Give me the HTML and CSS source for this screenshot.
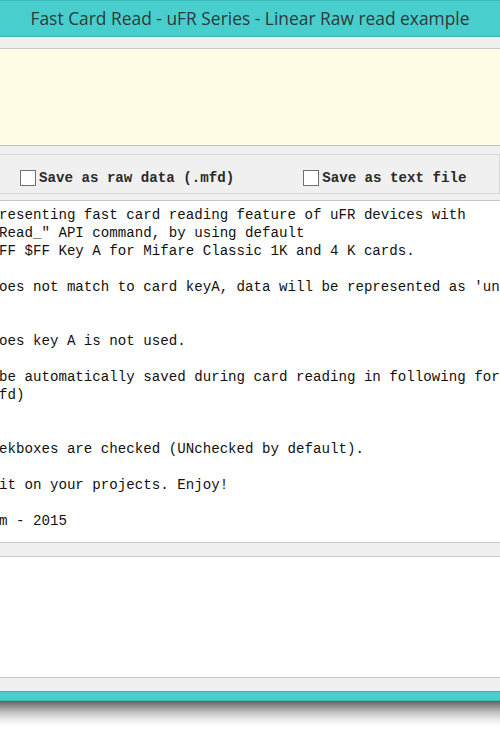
FILE: index.html
```html
<!DOCTYPE html>
<html>
<head>
<meta charset="utf-8">
<link rel="stylesheet" href="styles.css">
</head>
<body>
<div class="window">
  <div class="titlebar">Fast Card Read - uFR Series - Linear Raw read example</div>
  <div class="menustrip"></div>
  <div class="display"></div>
  <div class="options">
    <div class="groupbox">
      <label class="check check-raw"><span class="box"></span>Save as raw data (.mfd)</label>
      <label class="check check-text"><span class="box"></span>Save as text file</label>
    </div>
  </div>
  <div class="memo"><pre>resenting fast card reading feature of uFR devices with
Read_" API command, by using default
FF $FF Key A for Mifare Classic 1K and 4 K cards.

oes not match to card keyA, data will be represented as 'un


oes key A is not used.

be automatically saved during card reading in following form
fd)


ekboxes are checked (UNchecked by default).

it on your projects. Enjoy!

m - 2015</pre></div>
  <div class="band"></div>
  <div class="log"></div>
  <div class="band band-last"></div>
  <div class="frame-bottom"></div>
  <div class="shadow"></div>
</div>
</body>
</html>
```

FILE: styles.css
```css
html, body {
  margin: 0;
  padding: 0;
  background: #ffffff;
}

.window {
  width: 500px;
  overflow: hidden;
  display: flex;
  flex-direction: column;
}

.titlebar {
  height: 37px;
  box-sizing: border-box;
  border-top: 1px solid #3db9b7;
  border-bottom: 1px solid #3cb4b2;
  background: #48cfcd;
  color: #2e3a3a;
  font-family: "Open Sans", "Noto Sans", sans-serif;
  font-size: 17.4px;
  line-height: 35px;
  text-align: center;
  white-space: nowrap;
}

.menustrip {
  height: 11px;
  background: #efefef;
  border-bottom: 1px solid #c9c9c9;
}

.display {
  height: 96px;
  background: #fffde3;
  border-bottom: 1px solid #c3c3c3;
}

.options {
  background: #f0f0f0;
  padding: 8px 0 6px 0;
  border-bottom: 1px solid #c8c8c8;
}

.groupbox {
  height: 40px;
  box-sizing: border-box;
  padding-top: 7px;
  border-top: 1px solid #d7d7d7;
  border-bottom: 1px solid #d7d7d7;
  border-right: 1px solid #d7d7d7;
  display: flex;
  align-items: center;
  font-family: "Liberation Mono", "DejaVu Sans Mono", monospace;
  font-size: 14.15px;
  font-weight: bold;
  color: #2a2a2a;
}

.check {
  display: flex;
  align-items: center;
  white-space: nowrap;
}

.check-raw {
  margin-left: 20px;
}

.check-text {
  margin-left: 69px;
}

.box {
  width: 14px;
  height: 14px;
  border: 1px solid #707070;
  background: #ffffff;
  margin-right: 3px;
}

.memo {
  height: 342px;
  box-sizing: border-box;
  background: #ffffff;
  border-bottom: 1px solid #c6c6c6;
  overflow: hidden;
  padding-top: 5px;
}

.memo pre {
  margin: 0 0 0 -1px;
  font-family: "Liberation Mono", "DejaVu Sans Mono", monospace;
  font-size: 14.15px;
  line-height: 18px;
  color: #111111;
  white-space: pre;
}

.band {
  height: 13px;
  background: #f0f0f0;
  border-bottom: 1px solid #cacaca;
}

.log {
  height: 120px;
  background: #ffffff;
  border-bottom: 1px solid #c6c6c6;
}

.band-last {
  border-bottom: none;
}

.frame-bottom {
  height: 10px;
  box-sizing: border-box;
  background: #48cfcd;
  border-top: 1px solid #3aaeac;
  border-bottom: 1px solid #3cb6b4;
}

.shadow {
  height: 25px;
  background: linear-gradient(to bottom, #626262 0%, #8e8e8e 20%, #c6c6c6 48%, #ececec 75%, #ffffff 100%);
}
```
